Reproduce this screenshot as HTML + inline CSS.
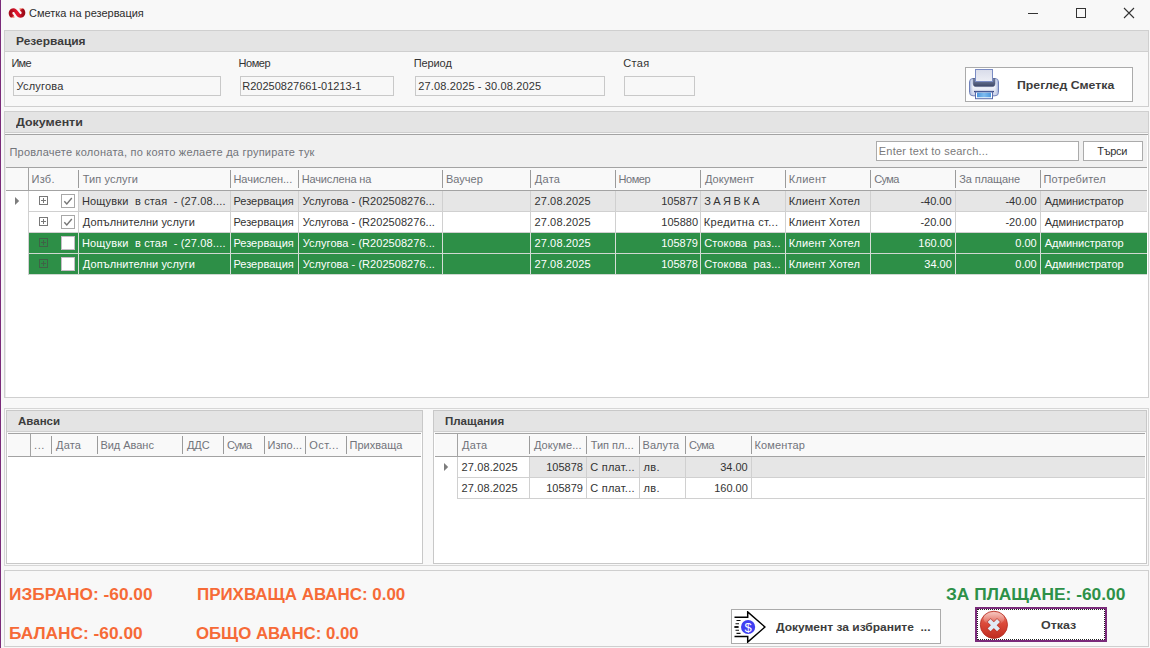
<!DOCTYPE html>
<html><head><meta charset="utf-8"><title>Сметка на резервация</title>
<style>
html,body{margin:0;padding:0}
body{width:1150px;height:648px;background:#f8f8f8;position:relative;overflow:hidden;font-family:"Liberation Sans",sans-serif}
.a{position:absolute;box-sizing:border-box}
.t{position:absolute;white-space:pre;font-family:"Liberation Sans",sans-serif}
</style></head><body>
<div class="a" style="left:0px;top:0px;width:1px;height:648px;background:#7a2b7a;"></div>
<svg class="a" style="left:1020px;top:0" width="130" height="30" viewBox="0 0 130 30"><g stroke="#333" stroke-width="1" fill="none" shape-rendering="crispEdges"><path d="M8 13.5H18"/><rect x="56.5" y="8.5" width="9" height="9"/></g><path d="M104 8L114 18M114 8L104 18" stroke="#333" stroke-width="1.1" fill="none"/></svg>
<svg class="a" style="left:8px;top:7px" width="18" height="12" viewBox="0 0 18 12"><defs><linearGradient id="lg1" x1="0" y1="0" x2="1" y2="0"><stop offset="0" stop-color="#a80d1c"/><stop offset=".45" stop-color="#e3152e"/><stop offset=".6" stop-color="#e3152e"/><stop offset="1" stop-color="#9c0a18"/></linearGradient><linearGradient id="lg2" x1="0" y1="1" x2="1" y2="0"><stop offset="0" stop-color="#f59a88"/><stop offset="1" stop-color="#d8202e"/></linearGradient><linearGradient id="lg3" x1="1" y1="0" x2="0" y2="1"><stop offset="0" stop-color="#f59a88"/><stop offset="1" stop-color="#d8202e"/></linearGradient></defs>
<path d="M6.2 9.2C4.8 9.6 3.4 9.3 2.7 8.2" stroke="url(#lg2)" stroke-width="3.2" fill="none" stroke-linecap="butt"/>
<path d="M11.8 2.8C13.2 2.4 14.6 2.7 15.3 3.8" stroke="url(#lg3)" stroke-width="3.2" fill="none"/>
<path d="M3.3 8.5C1.7 6.2 2.8 3.1 5.6 3.0C8.6 3.0 9.4 9.0 12.4 9.0C15.2 8.9 16.3 5.8 14.7 3.5" stroke="url(#lg1)" stroke-width="3.7" fill="none" stroke-linecap="round"/></svg>
<div class="a" style="left:4px;top:30px;width:1145px;height:77px;border:1px solid #cfcfcf;"></div>
<div class="a" style="left:5px;top:31px;width:1143px;height:20px;background:#e4e4e4;"></div>
<div class="a" style="left:5px;top:51px;width:1143px;height:1px;background:#cfcfcf;"></div>
<div class="a" style="left:13px;top:76px;width:208px;height:20px;background:#f8f8f8;border:1px solid #c9c9c9;"></div>
<div class="a" style="left:240px;top:76px;width:154px;height:20px;background:#f8f8f8;border:1px solid #c9c9c9;"></div>
<div class="a" style="left:415px;top:76px;width:190px;height:20px;background:#f8f8f8;border:1px solid #c9c9c9;"></div>
<div class="a" style="left:624px;top:76px;width:71px;height:20px;background:#f8f8f8;border:1px solid #c9c9c9;"></div>
<div class="a" style="left:965px;top:67px;width:168px;height:35px;background:#ffffff;border:1px solid #ababab;"></div>
<svg class="a" style="left:968px;top:68px" width="32" height="32" viewBox="0 0 32 32"><defs>
<linearGradient id="pb" x1="0" y1="0" x2="0" y2="1"><stop offset="0" stop-color="#dfe5f3"/><stop offset=".5" stop-color="#f2f4fa"/><stop offset="1" stop-color="#c5cde6"/></linearGradient>
<linearGradient id="ps" x1="0" y1="0" x2="0" y2="1"><stop offset="0" stop-color="#7a86a6"/><stop offset="1" stop-color="#3b4564"/></linearGradient>
<linearGradient id="pp" x1="0" y1="0" x2="0" y2="1"><stop offset="0" stop-color="#d9dcea"/><stop offset="1" stop-color="#eceef5"/></linearGradient>
<linearGradient id="pe" x1="0" y1="0" x2="1" y2="0"><stop offset="0" stop-color="#8ea0d2" stop-opacity=".75"/><stop offset=".16" stop-color="#fff" stop-opacity="0"/><stop offset=".84" stop-color="#fff" stop-opacity="0"/><stop offset="1" stop-color="#8ea0d2" stop-opacity=".75"/></linearGradient>
<linearGradient id="pt" x1="0" y1="0" x2="1" y2="0"><stop offset="0" stop-color="#4d97de"/><stop offset=".5" stop-color="#7fbcf0"/><stop offset="1" stop-color="#4d97de"/></linearGradient></defs>
<rect x="1.5" y="10.5" width="29" height="17.3" rx="3.5" fill="url(#pb)" stroke="#6f81ba"/>
<rect x="2" y="11" width="28" height="16.3" rx="3" fill="url(#pe)"/>
<path d="M5.2 10.5H27V15.8Q27 18.6 24.2 18.6H8Q5.2 18.6 5.2 15.8Z" fill="url(#ps)" stroke="#4a5680" stroke-width=".5"/>
<rect x="7.5" y="1.5" width="17" height="12" fill="url(#pp)" stroke="#7b8cc4"/>
<rect x="6" y="22.9" width="20" height="1.3" fill="#36457c"/>
<rect x="7.5" y="24" width="17" height="6.7" fill="#fff" stroke="#5a6cab"/>
<rect x="9" y="24.7" width="14" height="4.6" fill="url(#pt)"/></svg>
<div class="a" style="left:4px;top:111px;width:1145px;height:287px;background:#ffffff;border:1px solid #cfcfcf;"></div>
<div class="a" style="left:5px;top:112px;width:1143px;height:20px;background:#e4e4e4;"></div>
<div class="a" style="left:5px;top:132px;width:1143px;height:1px;background:#cfcfcf;"></div>
<div class="a" style="left:5px;top:133px;width:1143px;height:1px;background:#f8f8f8;"></div>
<div class="a" style="left:5px;top:134px;width:1px;height:263px;background:#ebebeb;"></div>
<div class="a" style="left:5px;top:134px;width:1143px;height:1px;background:#a3a3a3;"></div>
<div class="a" style="left:6px;top:135px;width:1141px;height:32px;background:#f0f0f0;"></div>
<div class="a" style="left:876px;top:141px;width:203px;height:20px;background:#ffffff;border:1px solid #ababab;"></div>
<div class="a" style="left:1083px;top:141px;width:60px;height:20px;background:#ffffff;border:1px solid #ababab;"></div>
<div class="a" style="left:6px;top:167px;width:1141px;height:1px;background:#a3a3a3;"></div>
<div class="a" style="left:6px;top:168px;width:1141px;height:22px;background:#f9f9f9;"></div>
<div class="a" style="left:6px;top:190px;width:1141px;height:1px;background:#a3a3a3;"></div>
<div class="a" style="left:78px;top:170px;width:1px;height:18px;background:#9b9b9b;"></div>
<div class="a" style="left:230px;top:170px;width:1px;height:18px;background:#9b9b9b;"></div>
<div class="a" style="left:298px;top:170px;width:1px;height:18px;background:#9b9b9b;"></div>
<div class="a" style="left:442px;top:170px;width:1px;height:18px;background:#9b9b9b;"></div>
<div class="a" style="left:530px;top:170px;width:1px;height:18px;background:#9b9b9b;"></div>
<div class="a" style="left:615px;top:170px;width:1px;height:18px;background:#9b9b9b;"></div>
<div class="a" style="left:700px;top:170px;width:1px;height:18px;background:#9b9b9b;"></div>
<div class="a" style="left:785px;top:170px;width:1px;height:18px;background:#9b9b9b;"></div>
<div class="a" style="left:870px;top:170px;width:1px;height:18px;background:#9b9b9b;"></div>
<div class="a" style="left:955px;top:170px;width:1px;height:18px;background:#9b9b9b;"></div>
<div class="a" style="left:1040px;top:170px;width:1px;height:18px;background:#9b9b9b;"></div>
<div class="a" style="left:28px;top:167px;width:1px;height:24px;background:#a3a3a3;"></div>
<div class="a" style="left:28px;top:191px;width:1px;height:84px;background:#d0d0d0;"></div>
<div class="a" style="left:29px;top:191px;width:1118px;height:20px;background:#e6e6e6;"></div>
<div class="a" style="left:29px;top:211px;width:1118px;height:1px;background:#d0d0d0;"></div>
<div class="a" style="left:29px;top:191px;width:49px;height:20px;background:#ffffff;"></div>
<div class="a" style="left:78px;top:191px;width:1px;height:20px;background:#d0d0d0;"></div>
<div class="a" style="left:230px;top:191px;width:1px;height:20px;background:#d0d0d0;"></div>
<div class="a" style="left:298px;top:191px;width:1px;height:20px;background:#d0d0d0;"></div>
<div class="a" style="left:442px;top:191px;width:1px;height:20px;background:#d0d0d0;"></div>
<div class="a" style="left:530px;top:191px;width:1px;height:20px;background:#d0d0d0;"></div>
<div class="a" style="left:615px;top:191px;width:1px;height:20px;background:#d0d0d0;"></div>
<div class="a" style="left:700px;top:191px;width:1px;height:20px;background:#d0d0d0;"></div>
<div class="a" style="left:785px;top:191px;width:1px;height:20px;background:#d0d0d0;"></div>
<div class="a" style="left:870px;top:191px;width:1px;height:20px;background:#d0d0d0;"></div>
<div class="a" style="left:955px;top:191px;width:1px;height:20px;background:#d0d0d0;"></div>
<div class="a" style="left:1040px;top:191px;width:1px;height:20px;background:#d0d0d0;"></div>
<svg class="a" style="left:39px;top:196px" width="9" height="9" viewBox="0 0 9 9" shape-rendering="crispEdges"><rect x=".5" y=".5" width="8" height="8" fill="none" stroke="#787878"/><path d="M2 4.5H7M4.5 2V7" stroke="#787878" fill="none"/></svg>
<div class="a" style="left:61px;top:194px;width:14px;height:14px;background:#ffffff;border:1px solid #a8a8a8;"></div>
<svg class="a" style="left:61px;top:194px" width="14" height="14" viewBox="0 0 14 14"><path d="M3.3 7.2L5.8 10L10.8 4" stroke="#767676" stroke-width="1.4" fill="none"/></svg>
<div class="a" style="left:29px;top:212px;width:1118px;height:20px;background:#ffffff;"></div>
<div class="a" style="left:29px;top:232px;width:1118px;height:1px;background:#d0d0d0;"></div>
<div class="a" style="left:78px;top:212px;width:1px;height:20px;background:#d0d0d0;"></div>
<div class="a" style="left:230px;top:212px;width:1px;height:20px;background:#d0d0d0;"></div>
<div class="a" style="left:298px;top:212px;width:1px;height:20px;background:#d0d0d0;"></div>
<div class="a" style="left:442px;top:212px;width:1px;height:20px;background:#d0d0d0;"></div>
<div class="a" style="left:530px;top:212px;width:1px;height:20px;background:#d0d0d0;"></div>
<div class="a" style="left:615px;top:212px;width:1px;height:20px;background:#d0d0d0;"></div>
<div class="a" style="left:700px;top:212px;width:1px;height:20px;background:#d0d0d0;"></div>
<div class="a" style="left:785px;top:212px;width:1px;height:20px;background:#d0d0d0;"></div>
<div class="a" style="left:870px;top:212px;width:1px;height:20px;background:#d0d0d0;"></div>
<div class="a" style="left:955px;top:212px;width:1px;height:20px;background:#d0d0d0;"></div>
<div class="a" style="left:1040px;top:212px;width:1px;height:20px;background:#d0d0d0;"></div>
<svg class="a" style="left:39px;top:217px" width="9" height="9" viewBox="0 0 9 9" shape-rendering="crispEdges"><rect x=".5" y=".5" width="8" height="8" fill="none" stroke="#787878"/><path d="M2 4.5H7M4.5 2V7" stroke="#787878" fill="none"/></svg>
<div class="a" style="left:61px;top:215px;width:14px;height:14px;background:#ffffff;border:1px solid #a8a8a8;"></div>
<svg class="a" style="left:61px;top:215px" width="14" height="14" viewBox="0 0 14 14"><path d="M3.3 7.2L5.8 10L10.8 4" stroke="#767676" stroke-width="1.4" fill="none"/></svg>
<div class="a" style="left:29px;top:233px;width:1118px;height:20px;background:#2d8f47;"></div>
<div class="a" style="left:29px;top:253px;width:1118px;height:1px;background:#cfd8d1;"></div>
<div class="a" style="left:78px;top:233px;width:1px;height:20px;background:#d6ded8;"></div>
<div class="a" style="left:230px;top:233px;width:1px;height:20px;background:#d6ded8;"></div>
<div class="a" style="left:298px;top:233px;width:1px;height:20px;background:#d6ded8;"></div>
<div class="a" style="left:442px;top:233px;width:1px;height:20px;background:#d6ded8;"></div>
<div class="a" style="left:530px;top:233px;width:1px;height:20px;background:#d6ded8;"></div>
<div class="a" style="left:615px;top:233px;width:1px;height:20px;background:#d6ded8;"></div>
<div class="a" style="left:700px;top:233px;width:1px;height:20px;background:#d6ded8;"></div>
<div class="a" style="left:785px;top:233px;width:1px;height:20px;background:#d6ded8;"></div>
<div class="a" style="left:870px;top:233px;width:1px;height:20px;background:#d6ded8;"></div>
<div class="a" style="left:955px;top:233px;width:1px;height:20px;background:#d6ded8;"></div>
<div class="a" style="left:1040px;top:233px;width:1px;height:20px;background:#d6ded8;"></div>
<svg class="a" style="left:39px;top:238px" width="9" height="9" viewBox="0 0 9 9" shape-rendering="crispEdges"><rect x=".5" y=".5" width="8" height="8" fill="none" stroke="#3f6247"/><path d="M2 4.5H7M4.5 2V7" stroke="#3f6247" fill="none"/></svg>
<div class="a" style="left:61px;top:236px;width:14px;height:14px;background:#ffffff;border:1px solid #c6bcc6;"></div>
<div class="a" style="left:29px;top:254px;width:1118px;height:20px;background:#2d8f47;"></div>
<div class="a" style="left:29px;top:274px;width:1118px;height:1px;background:#cfd8d1;"></div>
<div class="a" style="left:78px;top:254px;width:1px;height:20px;background:#d6ded8;"></div>
<div class="a" style="left:230px;top:254px;width:1px;height:20px;background:#d6ded8;"></div>
<div class="a" style="left:298px;top:254px;width:1px;height:20px;background:#d6ded8;"></div>
<div class="a" style="left:442px;top:254px;width:1px;height:20px;background:#d6ded8;"></div>
<div class="a" style="left:530px;top:254px;width:1px;height:20px;background:#d6ded8;"></div>
<div class="a" style="left:615px;top:254px;width:1px;height:20px;background:#d6ded8;"></div>
<div class="a" style="left:700px;top:254px;width:1px;height:20px;background:#d6ded8;"></div>
<div class="a" style="left:785px;top:254px;width:1px;height:20px;background:#d6ded8;"></div>
<div class="a" style="left:870px;top:254px;width:1px;height:20px;background:#d6ded8;"></div>
<div class="a" style="left:955px;top:254px;width:1px;height:20px;background:#d6ded8;"></div>
<div class="a" style="left:1040px;top:254px;width:1px;height:20px;background:#d6ded8;"></div>
<svg class="a" style="left:39px;top:259px" width="9" height="9" viewBox="0 0 9 9" shape-rendering="crispEdges"><rect x=".5" y=".5" width="8" height="8" fill="none" stroke="#3f6247"/><path d="M2 4.5H7M4.5 2V7" stroke="#3f6247" fill="none"/></svg>
<div class="a" style="left:61px;top:257px;width:14px;height:14px;background:#ffffff;border:1px solid #c6bcc6;"></div>
<svg class="a" style="left:14px;top:196px" width="6" height="10" viewBox="0 0 6 10"><path d="M1 1L5.2 5L1 9Z" fill="#7d7d7d"/></svg>
<div class="a" style="left:4px;top:408px;width:1145px;height:158px;border:1px solid #d6d6d6;"></div>
<div class="a" style="left:6px;top:410px;width:417px;height:154px;background:#ffffff;border:1px solid #c8c8c8;"></div>
<div class="a" style="left:7px;top:411px;width:415px;height:20px;background:#e4e4e4;"></div>
<div class="a" style="left:7px;top:431px;width:415px;height:1px;background:#cfcfcf;"></div>
<div class="a" style="left:7px;top:432px;width:415px;height:1px;background:#f8f8f8;"></div>
<div class="a" style="left:8px;top:433px;width:413px;height:1px;background:#a3a3a3;"></div>
<div class="a" style="left:8px;top:434px;width:413px;height:22px;background:#f9f9f9;"></div>
<div class="a" style="left:8px;top:456px;width:413px;height:1px;background:#a3a3a3;"></div>
<div class="a" style="left:30px;top:434px;width:1px;height:23px;background:#a3a3a3;"></div>
<div class="a" style="left:51px;top:436px;width:1px;height:18px;background:#9b9b9b;"></div>
<div class="a" style="left:97px;top:436px;width:1px;height:18px;background:#9b9b9b;"></div>
<div class="a" style="left:182px;top:436px;width:1px;height:18px;background:#9b9b9b;"></div>
<div class="a" style="left:223px;top:436px;width:1px;height:18px;background:#9b9b9b;"></div>
<div class="a" style="left:264px;top:436px;width:1px;height:18px;background:#9b9b9b;"></div>
<div class="a" style="left:305px;top:436px;width:1px;height:18px;background:#9b9b9b;"></div>
<div class="a" style="left:346px;top:436px;width:1px;height:18px;background:#9b9b9b;"></div>
<div class="a" style="left:433px;top:410px;width:714px;height:154px;background:#ffffff;border:1px solid #c8c8c8;"></div>
<div class="a" style="left:434px;top:411px;width:712px;height:20px;background:#e4e4e4;"></div>
<div class="a" style="left:434px;top:431px;width:712px;height:1px;background:#cfcfcf;"></div>
<div class="a" style="left:434px;top:432px;width:712px;height:1px;background:#f8f8f8;"></div>
<div class="a" style="left:435px;top:433px;width:710px;height:1px;background:#a3a3a3;"></div>
<div class="a" style="left:435px;top:434px;width:710px;height:22px;background:#f9f9f9;"></div>
<div class="a" style="left:435px;top:456px;width:710px;height:1px;background:#a3a3a3;"></div>
<div class="a" style="left:457px;top:433px;width:1px;height:24px;background:#a3a3a3;"></div>
<div class="a" style="left:457px;top:457px;width:1px;height:42px;background:#d0d0d0;"></div>
<div class="a" style="left:529px;top:436px;width:1px;height:18px;background:#9b9b9b;"></div>
<div class="a" style="left:586px;top:436px;width:1px;height:18px;background:#9b9b9b;"></div>
<div class="a" style="left:639px;top:436px;width:1px;height:18px;background:#9b9b9b;"></div>
<div class="a" style="left:685px;top:436px;width:1px;height:18px;background:#9b9b9b;"></div>
<div class="a" style="left:751px;top:436px;width:1px;height:18px;background:#9b9b9b;"></div>
<div class="a" style="left:458px;top:457px;width:687px;height:20px;background:#e6e6e6;"></div>
<div class="a" style="left:458px;top:457px;width:71px;height:20px;background:#ffffff;"></div>
<div class="a" style="left:458px;top:477px;width:687px;height:1px;background:#d0d0d0;"></div>
<div class="a" style="left:529px;top:457px;width:1px;height:20px;background:#d0d0d0;"></div>
<div class="a" style="left:586px;top:457px;width:1px;height:20px;background:#d0d0d0;"></div>
<div class="a" style="left:639px;top:457px;width:1px;height:20px;background:#d0d0d0;"></div>
<div class="a" style="left:685px;top:457px;width:1px;height:20px;background:#d0d0d0;"></div>
<div class="a" style="left:751px;top:457px;width:1px;height:20px;background:#d0d0d0;"></div>
<div class="a" style="left:458px;top:478px;width:687px;height:20px;background:#ffffff;"></div>
<div class="a" style="left:458px;top:498px;width:687px;height:1px;background:#d0d0d0;"></div>
<div class="a" style="left:529px;top:478px;width:1px;height:20px;background:#d0d0d0;"></div>
<div class="a" style="left:586px;top:478px;width:1px;height:20px;background:#d0d0d0;"></div>
<div class="a" style="left:639px;top:478px;width:1px;height:20px;background:#d0d0d0;"></div>
<div class="a" style="left:685px;top:478px;width:1px;height:20px;background:#d0d0d0;"></div>
<div class="a" style="left:751px;top:478px;width:1px;height:20px;background:#d0d0d0;"></div>
<svg class="a" style="left:443px;top:462px" width="6" height="10" viewBox="0 0 6 10"><path d="M1 1L5.2 5L1 9Z" fill="#7d7d7d"/></svg>
<div class="a" style="left:4px;top:570px;width:1145px;height:77px;background:#f8f8f8;border:1px solid #cfcfcf;"></div>
<div class="a" style="left:731px;top:609px;width:210px;height:35px;background:#ffffff;border:1px solid #ababab;"></div>
<svg class="a" style="left:734px;top:611px" width="32" height="32" viewBox="0 0 32 32">
<path d="M.5 6.2H13.7V.9L31 16L13.7 31.1V25.6H.5" fill="none" stroke="#000" stroke-width="1.5" stroke-linejoin="miter"/>
<g stroke="#111" stroke-width="1.1"><path d="M2.5 9.5H6.5M1.5 12.7H5M.5 16H4.5M1.5 19.2H5M2.5 22.4H6.5"/></g><path d="M.5 16H4.5" stroke="#111" stroke-width="1.8"/>
<circle cx="14.1" cy="16" r="7.1" fill="#3f3ff2"/>
<text x="14.1" y="20.6" font-family="Liberation Sans, sans-serif" font-size="13" font-weight="normal" fill="#fff" text-anchor="middle">$</text></svg>
<div class="a" style="left:975px;top:607px;width:132px;height:35px;background:#ffffff;border:2px solid #7a2b7a;"></div>
<div class="a" style="left:977px;top:609px;width:128px;height:31px;border:1px dotted #222;"></div>
<svg class="a" style="left:978px;top:609px" width="32" height="32" viewBox="0 0 32 32"><defs>
<linearGradient id="rg" x1="0" y1="0" x2="0" y2="1"><stop offset="0" stop-color="#ea8272"/><stop offset=".45" stop-color="#dc4a3a"/><stop offset="1" stop-color="#bf2c20"/></linearGradient>
<linearGradient id="rh" x1="0" y1="0" x2="0" y2="1"><stop offset="0" stop-color="#fff" stop-opacity=".55"/><stop offset="1" stop-color="#fff" stop-opacity=".05"/></linearGradient></defs>
<circle cx="15.9" cy="15.8" r="13.6" fill="url(#rg)" stroke="#b32a20" stroke-width=".8"/>
<ellipse cx="15.9" cy="9.5" rx="10.5" ry="6.5" fill="url(#rh)"/>
<path d="M10.6 11L21 21.4M21 11L10.6 21.4" stroke="#b5352a" stroke-width="5.6" stroke-linecap="butt" stroke-opacity=".75"/>
<path d="M11.1 11.5L20.5 20.9M20.5 11.5L11.1 20.9" stroke="#e1e9f5" stroke-width="4.1" stroke-linecap="butt"/></svg>
<div class="t" style="top:6px;font-size:11px;line-height:15px;color:#2e2e2e;left:28.97px;letter-spacing:-0.017px;">Сметка на резервация</div>
<div class="t" style="top:34px;font-size:11px;line-height:15px;color:#3c3c3c;font-weight:bold;left:15.71px;transform:scaleX(1.0871);transform-origin:0 0;">Резервация</div>
<div class="t" style="top:56px;font-size:11px;line-height:15px;color:#333333;left:11.40px;letter-spacing:-0.700px;">Име</div>
<div class="t" style="top:79px;font-size:11px;line-height:15px;color:#333333;left:16.48px;letter-spacing:0.206px;">Услугова</div>
<div class="t" style="top:56px;font-size:11px;line-height:15px;color:#333333;left:238.60px;letter-spacing:-0.487px;">Номер</div>
<div class="t" style="top:79px;font-size:11px;line-height:15px;color:#333333;left:242.30px;letter-spacing:-0.006px;">R20250827661-01213-1</div>
<div class="t" style="top:56px;font-size:11px;line-height:15px;color:#333333;left:413.70px;letter-spacing:-0.091px;">Период</div>
<div class="t" style="top:79px;font-size:11px;line-height:15px;color:#333333;left:418.31px;letter-spacing:0.128px;">27.08.2025 - 30.08.2025</div>
<div class="t" style="top:56px;font-size:11px;line-height:15px;color:#333333;left:623.17px;letter-spacing:0.407px;">Стая</div>
<div class="t" style="top:78px;font-size:11px;line-height:15px;color:#3c3c3c;font-weight:bold;left:1016.88px;transform:scaleX(1.1161);transform-origin:0 0;">Преглед Сметка</div>
<div class="t" style="top:115px;font-size:11px;line-height:15px;color:#3c3c3c;font-weight:bold;left:16.00px;transform:scaleX(1.1287);transform-origin:0 0;">Документи</div>
<div class="t" style="top:145px;font-size:11px;line-height:15px;color:#72747a;left:9.40px;letter-spacing:0.234px;">Провлачете колоната, по която желаете да групирате тук</div>
<div class="t" style="top:144px;font-size:11px;line-height:15px;color:#7a7a7a;left:878.80px;letter-spacing:0.215px;">Enter text to search...</div>
<div class="t" style="top:144px;font-size:11px;line-height:15px;color:#333333;left:1097.35px;letter-spacing:-0.355px;">Търси</div>
<div class="t" style="top:172px;font-size:11px;line-height:15px;color:#72747b;left:31.50px;letter-spacing:0.270px;">Изб.</div>
<div class="t" style="top:172px;font-size:11px;line-height:15px;color:#72747b;left:82.75px;letter-spacing:0.098px;">Тип услуги</div>
<div class="t" style="top:172px;font-size:11px;line-height:15px;color:#72747b;left:233.40px;letter-spacing:-0.018px;">Начислен...</div>
<div class="t" style="top:172px;font-size:11px;line-height:15px;color:#72747b;left:301.70px;letter-spacing:-0.136px;">Начислена на</div>
<div class="t" style="top:172px;font-size:11px;line-height:15px;color:#72747b;left:446.00px;letter-spacing:-0.010px;">Ваучер</div>
<div class="t" style="top:172px;font-size:11px;line-height:15px;color:#72747b;left:534.81px;letter-spacing:0.270px;">Дата</div>
<div class="t" style="top:172px;font-size:11px;line-height:15px;color:#72747b;left:618.60px;letter-spacing:-0.487px;">Номер</div>
<div class="t" style="top:172px;font-size:11px;line-height:15px;color:#72747b;left:704.91px;letter-spacing:0.054px;">Документ</div>
<div class="t" style="top:172px;font-size:11px;line-height:15px;color:#72747b;left:788.80px;letter-spacing:0.255px;">Клиент</div>
<div class="t" style="top:172px;font-size:11px;line-height:15px;color:#72747b;left:874.17px;letter-spacing:-0.590px;">Сума</div>
<div class="t" style="top:172px;font-size:11px;line-height:15px;color:#72747b;left:959.26px;letter-spacing:-0.096px;">За плащане</div>
<div class="t" style="top:172px;font-size:11px;line-height:15px;color:#72747b;left:1043.50px;letter-spacing:0.191px;">Потребител</div>
<div class="t" style="top:194px;font-size:11px;line-height:15px;color:#333333;left:81.90px;letter-spacing:0.154px;">Нощувки  в стая  - (27.08....</div>
<div class="t" style="top:194px;font-size:11px;line-height:15px;color:#333333;left:233.40px;letter-spacing:0.028px;">Резервация</div>
<div class="t" style="top:194px;font-size:11px;line-height:15px;color:#333333;left:302.78px;letter-spacing:0.043px;">Услугова - (R202508276...</div>
<div class="t" style="top:194px;font-size:11px;line-height:15px;color:#333333;left:534.41px;letter-spacing:0.142px;">27.08.2025</div>
<div class="t" style="top:194px;font-size:11px;line-height:15px;color:#333333;left:661.20px;">105877</div>
<div class="t" style="top:194px;font-size:11px;line-height:15px;color:#333333;left:704.17px;letter-spacing:-0.282px;">З А Я В К А</div>
<div class="t" style="top:194px;font-size:11px;line-height:15px;color:#333333;left:788.80px;letter-spacing:0.147px;">Клиент Хотел</div>
<div class="t" style="top:194px;font-size:11px;line-height:15px;color:#333333;left:920.38px;">-40.00</div>
<div class="t" style="top:194px;font-size:11px;line-height:15px;color:#333333;left:1005.38px;">-40.00</div>
<div class="t" style="top:194px;font-size:11px;line-height:15px;color:#333333;left:1044.76px;letter-spacing:-0.041px;">Администратор</div>
<div class="t" style="top:215px;font-size:11px;line-height:15px;color:#333333;left:82.81px;letter-spacing:0.084px;">Допълнителни услуги</div>
<div class="t" style="top:215px;font-size:11px;line-height:15px;color:#333333;left:233.40px;letter-spacing:0.028px;">Резервация</div>
<div class="t" style="top:215px;font-size:11px;line-height:15px;color:#333333;left:302.78px;letter-spacing:0.043px;">Услугова - (R202508276...</div>
<div class="t" style="top:215px;font-size:11px;line-height:15px;color:#333333;left:534.41px;letter-spacing:0.142px;">27.08.2025</div>
<div class="t" style="top:215px;font-size:11px;line-height:15px;color:#333333;left:661.31px;">105880</div>
<div class="t" style="top:215px;font-size:11px;line-height:15px;color:#333333;left:703.70px;letter-spacing:0.358px;">Кредитна ст...</div>
<div class="t" style="top:215px;font-size:11px;line-height:15px;color:#333333;left:788.80px;letter-spacing:0.147px;">Клиент Хотел</div>
<div class="t" style="top:215px;font-size:11px;line-height:15px;color:#333333;left:920.38px;">-20.00</div>
<div class="t" style="top:215px;font-size:11px;line-height:15px;color:#333333;left:1005.38px;">-20.00</div>
<div class="t" style="top:215px;font-size:11px;line-height:15px;color:#333333;left:1044.76px;letter-spacing:-0.041px;">Администратор</div>
<div class="t" style="top:236px;font-size:11px;line-height:15px;color:#ffffff;left:81.90px;letter-spacing:0.154px;">Нощувки  в стая  - (27.08....</div>
<div class="t" style="top:236px;font-size:11px;line-height:15px;color:#ffffff;left:233.40px;letter-spacing:0.028px;">Резервация</div>
<div class="t" style="top:236px;font-size:11px;line-height:15px;color:#ffffff;left:302.78px;letter-spacing:0.043px;">Услугова - (R202508276...</div>
<div class="t" style="top:236px;font-size:11px;line-height:15px;color:#ffffff;left:534.41px;letter-spacing:0.142px;">27.08.2025</div>
<div class="t" style="top:236px;font-size:11px;line-height:15px;color:#ffffff;left:661.20px;">105879</div>
<div class="t" style="top:236px;font-size:11px;line-height:15px;color:#ffffff;left:704.17px;letter-spacing:0.153px;">Стокова  раз...</div>
<div class="t" style="top:236px;font-size:11px;line-height:15px;color:#ffffff;left:788.80px;letter-spacing:0.147px;">Клиент Хотел</div>
<div class="t" style="top:236px;font-size:11px;line-height:15px;color:#ffffff;left:918.31px;">160.00</div>
<div class="t" style="top:236px;font-size:11px;line-height:15px;color:#ffffff;left:1015.28px;">0.00</div>
<div class="t" style="top:236px;font-size:11px;line-height:15px;color:#ffffff;left:1044.76px;letter-spacing:-0.041px;">Администратор</div>
<div class="t" style="top:257px;font-size:11px;line-height:15px;color:#ffffff;left:82.81px;letter-spacing:0.084px;">Допълнителни услуги</div>
<div class="t" style="top:257px;font-size:11px;line-height:15px;color:#ffffff;left:233.40px;letter-spacing:0.028px;">Резервация</div>
<div class="t" style="top:257px;font-size:11px;line-height:15px;color:#ffffff;left:302.78px;letter-spacing:0.043px;">Услугова - (R202508276...</div>
<div class="t" style="top:257px;font-size:11px;line-height:15px;color:#ffffff;left:534.41px;letter-spacing:0.142px;">27.08.2025</div>
<div class="t" style="top:257px;font-size:11px;line-height:15px;color:#ffffff;left:661.23px;">105878</div>
<div class="t" style="top:257px;font-size:11px;line-height:15px;color:#ffffff;left:704.17px;letter-spacing:0.153px;">Стокова  раз...</div>
<div class="t" style="top:257px;font-size:11px;line-height:15px;color:#ffffff;left:788.80px;letter-spacing:0.147px;">Клиент Хотел</div>
<div class="t" style="top:257px;font-size:11px;line-height:15px;color:#ffffff;left:924.31px;">34.00</div>
<div class="t" style="top:257px;font-size:11px;line-height:15px;color:#ffffff;left:1015.28px;">0.00</div>
<div class="t" style="top:257px;font-size:11px;line-height:15px;color:#ffffff;left:1044.76px;letter-spacing:-0.041px;">Администратор</div>
<div class="t" style="top:414px;font-size:11px;line-height:15px;color:#3c3c3c;font-weight:bold;left:17.62px;transform:scaleX(1.0462);transform-origin:0 0;">Аванси</div>
<div class="t" style="top:438px;font-size:11px;line-height:15px;color:#72747b;left:34.08px;letter-spacing:0.570px;">...</div>
<div class="t" style="top:438px;font-size:11px;line-height:15px;color:#72747b;left:56.12px;letter-spacing:0.137px;">Дата</div>
<div class="t" style="top:438px;font-size:11px;line-height:15px;color:#72747b;left:100.40px;letter-spacing:-0.022px;">Вид Аванс</div>
<div class="t" style="top:438px;font-size:11px;line-height:15px;color:#72747b;left:187.01px;letter-spacing:-0.133px;">ДДС</div>
<div class="t" style="top:438px;font-size:11px;line-height:15px;color:#72747b;left:227.07px;letter-spacing:-0.657px;">Сума</div>
<div class="t" style="top:438px;font-size:11px;line-height:15px;color:#72747b;left:267.60px;letter-spacing:0.035px;">Изпо...</div>
<div class="t" style="top:438px;font-size:11px;line-height:15px;color:#72747b;left:309.34px;letter-spacing:0.437px;">Ост...</div>
<div class="t" style="top:438px;font-size:11px;line-height:15px;color:#72747b;left:349.50px;letter-spacing:0.029px;">Прихваща</div>
<div class="t" style="top:414px;font-size:11px;line-height:15px;color:#3c3c3c;font-weight:bold;left:444.85px;transform:scaleX(1.0489);transform-origin:0 0;">Плащания</div>
<div class="t" style="top:438px;font-size:11px;line-height:15px;color:#72747b;left:462.02px;letter-spacing:0.270px;">Дата</div>
<div class="t" style="top:438px;font-size:11px;line-height:15px;color:#72747b;left:533.91px;letter-spacing:0.093px;">Докуме...</div>
<div class="t" style="top:438px;font-size:11px;line-height:15px;color:#72747b;left:590.64px;letter-spacing:0.022px;">Тип пл...</div>
<div class="t" style="top:438px;font-size:11px;line-height:15px;color:#72747b;left:642.50px;letter-spacing:0.065px;">Валута</div>
<div class="t" style="top:438px;font-size:11px;line-height:15px;color:#72747b;left:689.07px;letter-spacing:-0.590px;">Сума</div>
<div class="t" style="top:438px;font-size:11px;line-height:15px;color:#72747b;left:754.50px;letter-spacing:0.124px;">Коментар</div>
<div class="t" style="top:460px;font-size:11px;line-height:15px;color:#333333;left:461.61px;letter-spacing:0.108px;">27.08.2025</div>
<div class="t" style="top:460px;font-size:11px;line-height:15px;color:#333333;left:546.23px;">105878</div>
<div class="t" style="top:460px;font-size:11px;line-height:15px;color:#333333;left:590.17px;letter-spacing:0.268px;">С плат...</div>
<div class="t" style="top:460px;font-size:11px;line-height:15px;color:#333333;left:643.54px;letter-spacing:0.335px;">лв.</div>
<div class="t" style="top:460px;font-size:11px;line-height:15px;color:#333333;left:720.21px;">34.00</div>
<div class="t" style="top:481px;font-size:11px;line-height:15px;color:#333333;left:461.61px;letter-spacing:0.108px;">27.08.2025</div>
<div class="t" style="top:481px;font-size:11px;line-height:15px;color:#333333;left:546.20px;">105879</div>
<div class="t" style="top:481px;font-size:11px;line-height:15px;color:#333333;left:590.17px;letter-spacing:0.268px;">С плат...</div>
<div class="t" style="top:481px;font-size:11px;line-height:15px;color:#333333;left:643.54px;letter-spacing:0.335px;">лв.</div>
<div class="t" style="top:481px;font-size:11px;line-height:15px;color:#333333;left:714.21px;">160.00</div>
<div class="t" style="top:585px;font-size:16px;line-height:20px;color:#f66a37;font-weight:bold;left:8.52px;transform:scaleX(1.0789);transform-origin:0 0;">ИЗБРАНО: -60.00</div>
<div class="t" style="top:624px;font-size:16px;line-height:20px;color:#f66a37;font-weight:bold;left:8.52px;transform:scaleX(1.0803);transform-origin:0 0;">БАЛАНС: -60.00</div>
<div class="t" style="top:585px;font-size:16px;line-height:20px;color:#f66a37;font-weight:bold;left:196.54px;transform:scaleX(1.0577);transform-origin:0 0;">ПРИХВАЩА АВАНС: 0.00</div>
<div class="t" style="top:624px;font-size:16px;line-height:20px;color:#f66a37;font-weight:bold;left:196.36px;transform:scaleX(1.0488);transform-origin:0 0;">ОБЩО АВАНС: 0.00</div>
<div class="t" style="top:585px;font-size:16px;line-height:20px;color:#2d9148;font-weight:bold;left:946.31px;transform:scaleX(1.0830);transform-origin:0 0;">ЗА ПЛАЩАНЕ: -60.00</div>
<div class="t" style="top:620px;font-size:11px;line-height:15px;color:#3c3c3c;font-weight:bold;left:776.40px;transform:scaleX(1.0894);transform-origin:0 0;">Документ за избраните  ...</div>
<div class="t" style="top:618px;font-size:11px;line-height:15px;color:#3c3c3c;font-weight:bold;left:1040.58px;transform:scaleX(1.1311);transform-origin:0 0;">Отказ</div>
</body></html>
